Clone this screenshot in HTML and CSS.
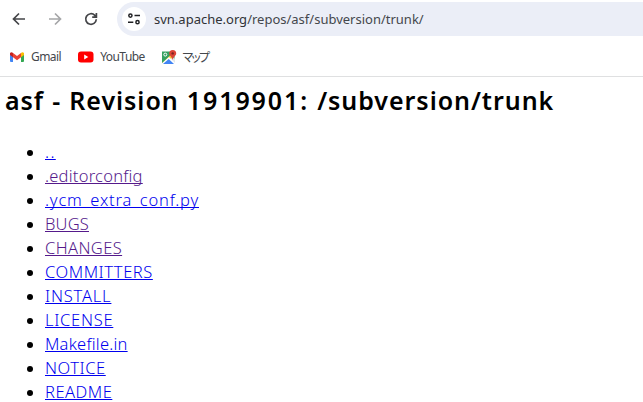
FILE: index.html
```html
<!DOCTYPE html>
<html lang="ja">
<head>
<meta charset="utf-8">
<title>asf - Revision 1919901: /subversion/trunk</title>
<link rel="stylesheet" href="styles.css">
</head>
<body>
<header class="browser">
  <div class="toolbar">
    <svg class="nav back" viewBox="0 0 16 16"><path d="M14 8H3M8 2.5L2.5 8L8 13.5"/></svg>
    <svg class="nav forward" viewBox="0 0 16 16"><path d="M2 8h11M8 2.5L13.5 8L8 13.5"/></svg>
    <svg class="nav reload" viewBox="0 0 16 16"><path d="M13.3 8.3A5.3 5.3 0 1 1 11.8 4.3L13.2 5.8M13.4 2v4.2H9.2"/></svg>
    <div class="address">
      <span class="site"><svg viewBox="0 0 14 14"><circle cx="3.4" cy="3.6" r="1.6"/><path d="M7.5 3.6H13M1 10.2h5.3"/><circle cx="10.5" cy="10.2" r="1.6"/></svg></span>
      <span class="url"><b>svn.apache.org</b>/repos/asf/subversion/trunk/</span>
    </div>
  </div>
  <nav class="bookmarks">
    <a class="bookmark gmail"><svg viewBox="0 0 14 12"><path fill="#4285f4" d="M0 3l3 2v6H1Q0 11 0 10z"/><path fill="#34a853" d="M11 5l3-2v7q0 1-1 1h-2z"/><path fill="#fbbc04" d="M11 2q1.5-1.5 3 0v2l-3 2.3z"/><path fill="#c5221f" d="M0 2q1.5-1.500 3 0v4.300L0 4z"/><path fill="#ea4335" d="M3 2l4 3 4-3v4.300L7 9.300 3 6.300z"/></svg><span>Gmail</span></a>
    <a class="bookmark youtube"><svg viewBox="0 0 16 12"><rect y=".5" width="15.500" height="11" rx="3" fill="#f00"/><path fill="#fff" d="M6.200 3.600v4.800L10.300 6z"/></svg><span>YouTube</span></a>
    <a class="bookmark maps"><svg viewBox="0 0 16 16"><path fill="#34a060" d="M1 2.500h12.500v12.500H1z"/><path fill="#e4e7e8" d="M10 6l4 4v5L8 9z"/><path fill="#fbc934" d="M1.300 14L11 4.500l1 3.500-8 7z"/><path fill="#fff" d="M1 14.200L8 8l6 6v1H1z"/><path fill="#4285f4" d="M2 15l5.700-5L13 15z"/><circle cx="4.300" cy="5.600" r="1.500" fill="none" stroke="#fff"/><path fill="#db4437" d="M11.700 1a3.500 3.500 0 0 1 3.500 3.500c0 2.200-2.700 3-3.500 6.500-.8-3.500-3.500-4.300-3.500-6.500A3.500 3.500 0 0 1 11.700 1z"/><circle cx="11.700" cy="4.400" r="1.200" fill="#7b231e"/></svg><span>マップ</span></a>
  </nav>
</header>
<main>
  <h2>asf - Revision <span class="number">1919901:</span> /subversion/trunk</h2>
  <ul>
    <li><a class="parent" href="#up">..</a></li>
    <li><a class="visited editorconfig" href="#editorconfig">.editorconfig</a></li>
    <li><a class="ycm" href="#ycm">.ycm_extra_conf.py</a></li>
    <li><a class="visited bugs" href="#bugs">BUGS</a></li>
    <li><a class="visited changes" href="#changes">CHANGES</a></li>
    <li><a class="committers" href="#committers">COMMITTERS</a></li>
    <li><a class="install" href="#install">INSTALL</a></li>
    <li><a class="license" href="#license">LICENSE</a></li>
    <li><a class="makefile" href="#makefile">Makefile.in</a></li>
    <li><a class="notice" href="#notice">NOTICE</a></li>
    <li><a class="readme" href="#readme">README</a></li>
  </ul>
</main>
</body>
</html>
```
FILE: styles.css
```css
* { box-sizing: border-box; }
body {
  margin: 0;
  height: 402px;
  overflow: hidden;
  background: #fff;
  color: #000;
  font-family: "Noto Sans", "Noto Sans CJK JP", sans-serif;
}
.browser {
  height: 77px;
  border-bottom: 1px solid #dfe0e1;
}
.toolbar {
  display: flex;
  align-items: center;
  height: 38px;
  padding-left: 11px;
}
.nav {
  width: 16px;
  height: 16px;
  margin-right: 20px;
  fill: none;
  stroke: #444548;
  stroke-width: 1.7;
}
.forward { stroke: #a5a6a8; }
.reload { margin-right: 18px; }
.address {
  flex: 1;
  display: flex;
  align-items: center;
  height: 34px;
  padding-left: 5px;
  border-radius: 17px 0 0 17px;
  background: #ebeef7;
}
.site {
  display: grid;
  place-items: center;
  width: 24px;
  height: 24px;
  border-radius: 50%;
  background: #fff;
}
.site svg {
  width: 14px;
  height: 14px;
  fill: none;
  stroke: #202124;
  stroke-width: 1.5;
}
.url {
  margin-left: 8px;
  color: #44474c;
  font-size: 13px;
  white-space: nowrap;
}
.url b { font-weight: 400; color: #303236; }
.bookmarks {
  display: flex;
  align-items: center;
  height: 38px;
  padding-left: 10px;
}
.bookmark {
  display: flex;
  align-items: center;
  color: #44474c;
  font-size: 12px;
  line-height: 16px;
  letter-spacing: -0.55px;
}
.gmail svg { width: 14px; height: 12px; margin-right: 7px; }
.youtube { margin-left: 17px; }
.youtube svg { width: 16px; height: 12px; margin-right: 6px; }
.maps { margin-left: 16px; }
.maps svg { width: 16px; height: 16px; margin-right: 5px; }
.maps span {
  font-family: "Noto Sans CJK JP", sans-serif;
  letter-spacing: -3.8px;
}
main { padding-left: 5px; }
h2 {
  margin: 5px 0 22px;
  font-size: 25px;
  font-weight: 600;
  line-height: 36px;
  letter-spacing: 0.95px;
  word-spacing: 0.7px;
  white-space: nowrap;
}
.number { letter-spacing: 1.9px; }
ul {
  margin: 0;
  padding-left: 40px;
}
li {
  font-size: 16px;
  line-height: 24px;
}
li a {
  color: #00e;
  font-size: 16.5px;
  font-weight: 300;
  line-height: 1;
  text-decoration-thickness: 1px;
  text-underline-offset: 1px;
  text-decoration-skip-ink: none;
}
li a.visited { color: #551a8b; }
.parent { letter-spacing: 1.35px; }
.editorconfig { letter-spacing: 0.24px; }
.ycm { letter-spacing: 0.81px; }
.bugs { letter-spacing: 0.17px; }
.changes { letter-spacing: 0.39px; }
.committers { letter-spacing: 0.54px; }
.install { letter-spacing: 0.8px; }
.license { letter-spacing: 0.73px; }
.makefile { letter-spacing: 0.23px; }
.notice { letter-spacing: 0.54px; }
.readme { letter-spacing: 0.5px; }
```
